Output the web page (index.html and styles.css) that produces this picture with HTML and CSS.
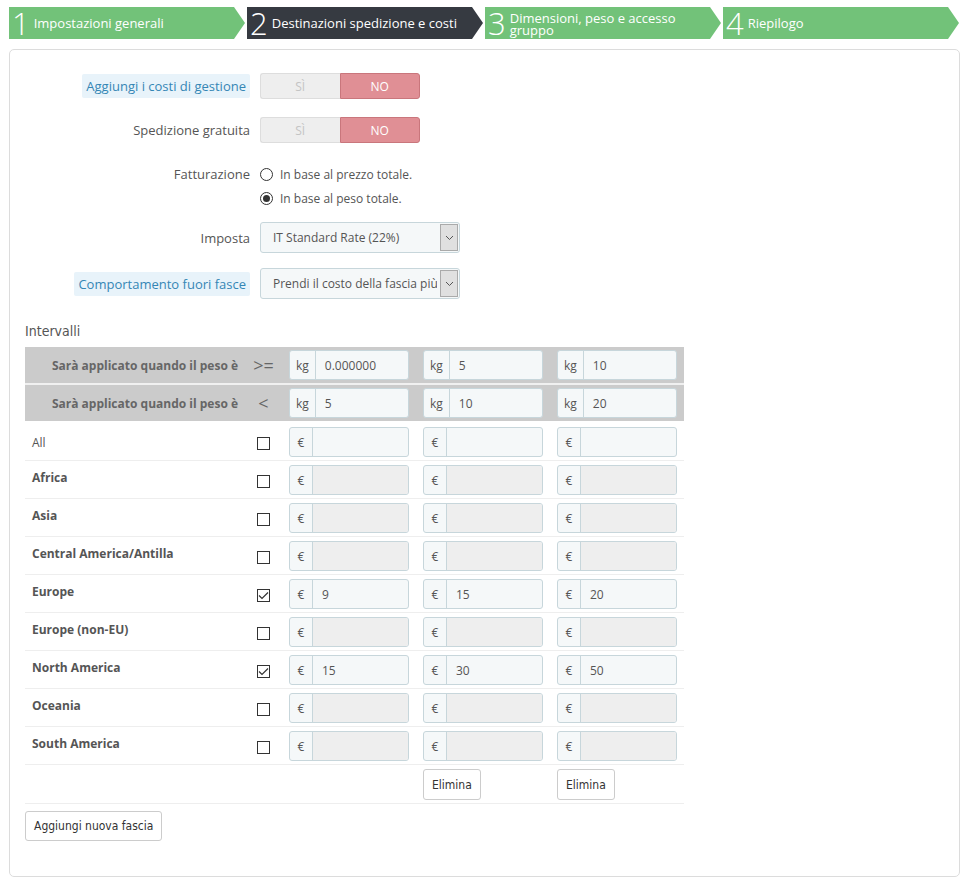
FILE: index.html
```html
<!DOCTYPE html>
<html lang="it">
<head>
    <meta charset="UTF-8">
    <title>Corriere - Destinazioni spedizione e costi</title>
    <link rel="stylesheet" href="styles.css">
</head>
<body>

    <div class="steps">
        <div class="step done"><span class="num">1</span><span class="txt">Impostazioni generali</span></div>
        <div class="step current"><span class="num">2</span><span class="txt">Destinazioni spedizione e costi</span></div>
        <div class="step done"><span class="num">3</span><span class="txt two">Dimensioni, peso e accesso gruppo</span></div>
        <div class="step done"><span class="num">4</span><span class="txt">Riepilogo</span></div>
    </div>

    <div class="panel">
        <div class="form-row">
            <div class="lbl"><span class="hint">Aggiungi i costi di gestione</span></div>
            <div class="switch"><span class="si">SÌ</span><span class="no">NO</span></div>
        </div>
        <div class="form-row">
            <div class="lbl">Spedizione gratuita</div>
            <div class="switch"><span class="si">SÌ</span><span class="no">NO</span></div>
        </div>
        <div class="form-row radios-row">
            <div class="lbl">Fatturazione</div>
            <div class="radios">
                <div class="radio"><span class="dot"></span>In base al prezzo totale.</div>
                <div class="radio"><span class="dot on"></span>In base al peso totale.</div>
            </div>
        </div>
        <div class="form-row select-row">
            <div class="lbl">Imposta</div>
            <div class="select"><span class="val">IT Standard Rate (22%)</span><span class="arrow"><svg width="9" height="6" viewBox="0 0 9 6"><path d="M1 1l3.5 3.5L8 1" fill="none" stroke="#555" stroke-width="1"/></svg></span></div>
        </div>
        <div class="form-row select-row">
            <div class="lbl"><span class="hint">Comportamento fuori fasce</span></div>
            <div class="select"><span class="val">Prendi il costo della fascia più alta</span><span class="arrow"><svg width="9" height="6" viewBox="0 0 9 6"><path d="M1 1l3.5 3.5L8 1" fill="none" stroke="#555" stroke-width="1"/></svg></span></div>
        </div>

        <h4 class="section">Intervalli</h4>

        <table class="ranges">
            <tr class="head">
                <td class="name">Sarà applicato quando il peso è</td>
                <td class="op">&gt;=</td>
                <td><div class="ig"><span class="add">kg</span><span class="inp">0.000000</span></div></td>
                <td><div class="ig"><span class="add">kg</span><span class="inp">5</span></div></td>
                <td><div class="ig"><span class="add">kg</span><span class="inp">10</span></div></td>
            </tr>
            <tr class="head second">
                <td class="name">Sarà applicato quando il peso è</td>
                <td class="op">&lt;</td>
                <td><div class="ig"><span class="add">kg</span><span class="inp">5</span></div></td>
                <td><div class="ig"><span class="add">kg</span><span class="inp">10</span></div></td>
                <td><div class="ig"><span class="add">kg</span><span class="inp">20</span></div></td>
            </tr>
            <tr>
                <td class="zone all">All</td>
                <td class="chk"><span class="box"></span></td>
                <td><div class="ig"><span class="add">€</span><span class="inp"></span></div></td>
                <td><div class="ig"><span class="add">€</span><span class="inp"></span></div></td>
                <td><div class="ig"><span class="add">€</span><span class="inp"></span></div></td>
            </tr>
            <tr>
                <td class="zone">Africa</td>
                <td class="chk"><span class="box"></span></td>
                <td><div class="ig off"><span class="add">€</span><span class="inp"></span></div></td>
                <td><div class="ig off"><span class="add">€</span><span class="inp"></span></div></td>
                <td><div class="ig off"><span class="add">€</span><span class="inp"></span></div></td>
            </tr>
            <tr>
                <td class="zone">Asia</td>
                <td class="chk"><span class="box"></span></td>
                <td><div class="ig off"><span class="add">€</span><span class="inp"></span></div></td>
                <td><div class="ig off"><span class="add">€</span><span class="inp"></span></div></td>
                <td><div class="ig off"><span class="add">€</span><span class="inp"></span></div></td>
            </tr>
            <tr>
                <td class="zone">Central America/Antilla</td>
                <td class="chk"><span class="box"></span></td>
                <td><div class="ig off"><span class="add">€</span><span class="inp"></span></div></td>
                <td><div class="ig off"><span class="add">€</span><span class="inp"></span></div></td>
                <td><div class="ig off"><span class="add">€</span><span class="inp"></span></div></td>
            </tr>
            <tr>
                <td class="zone">Europe</td>
                <td class="chk"><span class="box"><svg width="11" height="9" viewBox="0 0 11 9"><path d="M1 4.5l3 3L10 1.5" fill="none" stroke="#333" stroke-width="1.2"/></svg></span></td>
                <td><div class="ig"><span class="add">€</span><span class="inp">9</span></div></td>
                <td><div class="ig"><span class="add">€</span><span class="inp">15</span></div></td>
                <td><div class="ig"><span class="add">€</span><span class="inp">20</span></div></td>
            </tr>
            <tr>
                <td class="zone">Europe (non-EU)</td>
                <td class="chk"><span class="box"></span></td>
                <td><div class="ig off"><span class="add">€</span><span class="inp"></span></div></td>
                <td><div class="ig off"><span class="add">€</span><span class="inp"></span></div></td>
                <td><div class="ig off"><span class="add">€</span><span class="inp"></span></div></td>
            </tr>
            <tr>
                <td class="zone">North America</td>
                <td class="chk"><span class="box"><svg width="11" height="9" viewBox="0 0 11 9"><path d="M1 4.5l3 3L10 1.5" fill="none" stroke="#333" stroke-width="1.2"/></svg></span></td>
                <td><div class="ig"><span class="add">€</span><span class="inp">15</span></div></td>
                <td><div class="ig"><span class="add">€</span><span class="inp">30</span></div></td>
                <td><div class="ig"><span class="add">€</span><span class="inp">50</span></div></td>
            </tr>
            <tr>
                <td class="zone">Oceania</td>
                <td class="chk"><span class="box"></span></td>
                <td><div class="ig off"><span class="add">€</span><span class="inp"></span></div></td>
                <td><div class="ig off"><span class="add">€</span><span class="inp"></span></div></td>
                <td><div class="ig off"><span class="add">€</span><span class="inp"></span></div></td>
            </tr>
            <tr>
                <td class="zone">South America</td>
                <td class="chk"><span class="box"></span></td>
                <td><div class="ig off"><span class="add">€</span><span class="inp"></span></div></td>
                <td><div class="ig off"><span class="add">€</span><span class="inp"></span></div></td>
                <td><div class="ig off"><span class="add">€</span><span class="inp"></span></div></td>
            </tr>
            <tr class="actions">
                <td></td>
                <td></td>
                <td></td>
                <td><button class="btn">Elimina</button></td>
                <td><button class="btn">Elimina</button></td>
            </tr>
        </table>

        <button class="btn add-range">Aggiungi nuova fascia</button>
    </div>

</body>
</html>
```

FILE: styles.css
```css
body {
    margin: 0;
    padding: 7px 7px 0 9px;
    font-family: "Open Sans", "Liberation Sans", sans-serif;
    font-size: 12px;
    color: #555;
    background: #fff;
}
.steps {
    display: flex;
    gap: 2px;
    height: 32px;
}
.step {
    width: 236px;
    height: 32px;
    display: flex;
    align-items: center;
    color: #fff;
    background: #72c279;
    clip-path: polygon(0 0, 225px 0, 236px 50%, 225px 100%, 0 100%);
}
.step.current {
    background: #363a41;
}
.num {
    font-size: 31px;
    font-weight: 300;
    line-height: 32px;
    height: 32px;
    padding: 0 4px 0 3px;
}
.txt {
    font-size: 13px;
    line-height: 12px;
}
.txt.two {
    width: 180px;
    margin-top: 1px;
}
.panel {
    margin-top: 10px;
    width: 951px;
    height: 828px;
    border: 1px solid #dcdcdc;
    border-radius: 5px;
    box-sizing: border-box;
    padding: 23px 0 0 15px;
}
.form-row {
    display: flex;
    align-items: center;
    margin-bottom: 18px;
}
.lbl {
    width: 225px;
    text-align: right;
    padding-right: 10px;
    font-size: 13px;
}
.hint {
    background: #e8f3fa;
    color: #3586b5;
    padding: 3px 4px;
    border-radius: 2px;
}
.switch {
    display: flex;
    width: 160px;
    height: 26px;
    font-size: 12px;
}
.switch span {
    flex: 1;
    display: flex;
    align-items: center;
    justify-content: center;
    border-radius: 3px;
}
.switch .si {
    background: #eee;
    color: #c4c4c4;
    border: 1px solid #ddd;
    border-right: none;
    border-radius: 3px 0 0 3px;
}
.switch .no {
    background: #e08f95;
    color: #fff;
    border: 1px solid #c9767c;
    border-radius: 0 3px 3px 0;
}
.radios-row {
    align-items: flex-start;
    margin-top: 23px;
    margin-bottom: 8px;
}
.radios-row .lbl {
    line-height: 16px;
}
.radio {
    display: flex;
    align-items: center;
    height: 16px;
    margin-bottom: 8px;
    font-size: 12px;
}
.dot {
    width: 11px;
    height: 11px;
    border: 1px solid #333;
    border-radius: 50%;
    margin-right: 7px;
    position: relative;
}
.dot.on::after {
    content: "";
    position: absolute;
    left: 2px;
    top: 2px;
    width: 7px;
    height: 7px;
    border-radius: 50%;
    background: #333;
}
.select-row {
    margin-bottom: 15px;
}
.select {
    width: 200px;
    height: 31px;
    box-sizing: border-box;
    border: 1px solid #c7d6db;
    border-radius: 3px;
    background: #f5f8f9;
    display: flex;
    align-items: center;
    font-size: 12px;
    color: #555;
}
.select .val {
    flex: 1;
    padding-left: 12px;
    white-space: nowrap;
    overflow: hidden;
}
.select .arrow {
    width: 16px;
    align-self: stretch;
    margin: 1px;
    margin-left: 3px;
    background: #e0e0e0;
    border: 1px solid #aaa;
    display: flex;
    align-items: center;
    justify-content: center;
}
.section {
    font-family: "Liberation Sans Narrow", "DejaVu Sans Condensed", sans-serif;
    font-weight: normal;
    font-size: 14px;
    color: #555;
    margin: 24px 0 8px 0;
}
.ranges {
    border-collapse: collapse;
    width: 659px;
}
.ranges td {
    padding: 4px 7px 3px;
    border-bottom: 1px solid #eee;
    vertical-align: middle;
}
.ranges td:nth-child(1) {
    width: 208px;
}
.ranges td:nth-child(2) {
    width: 23px;
    text-align: center;
}
.ranges .head td {
    padding: 3px 7px;
    background: #cbcbcb;
    border-bottom: 2px solid #f0f0f0;
}
.ranges .head.second td {
    border-bottom: 2px solid #fff;
}
.ranges .name {
    font-weight: bold;
    text-align: right;
    font-size: 12px;
    color: #666;
}
.ranges .op {
    font-size: 18px;
    color: #666;
}
.zone {
    font-weight: bold;
    font-size: 12px;
    color: #555;
    vertical-align: top !important;
    padding-top: 8px !important;
}
.zone.all {
    font-weight: normal;
    vertical-align: middle !important;
    padding-top: 4px !important;
}
.box {
    display: inline-flex;
    align-items: center;
    justify-content: center;
    width: 11px;
    height: 11px;
    border: 1px solid #333;
    vertical-align: middle;
}
.ig {
    display: flex;
    width: 120px;
    height: 30px;
    box-sizing: border-box;
    border: 1px solid #c7d6db;
    border-radius: 3px;
    background: #f5f8f9;
    overflow: hidden;
}
.ig .add {
    min-width: 10px;
    padding: 0 6px;
    border-right: 1px solid #c7d6db;
    display: flex;
    align-items: center;
    justify-content: center;
    font-size: 12px;
    color: #555;
}
.ig .inp {
    flex: 1;
    display: flex;
    align-items: center;
    padding-left: 9px;
    font-size: 12px;
    color: #555;
}
.ig.off .inp {
    background: #eee;
}
.actions td {
    height: 30px;
}
.btn {
    font-family: "Liberation Sans Narrow", "DejaVu Sans Condensed", sans-serif;
    font-size: 12px;
    color: #333;
    background: #fff;
    border: 1px solid #ccc;
    border-radius: 3px;
    height: 31px;
    padding: 0 8px;
}
.add-range {
    margin-top: 7px;
    height: 30px;
}
```
